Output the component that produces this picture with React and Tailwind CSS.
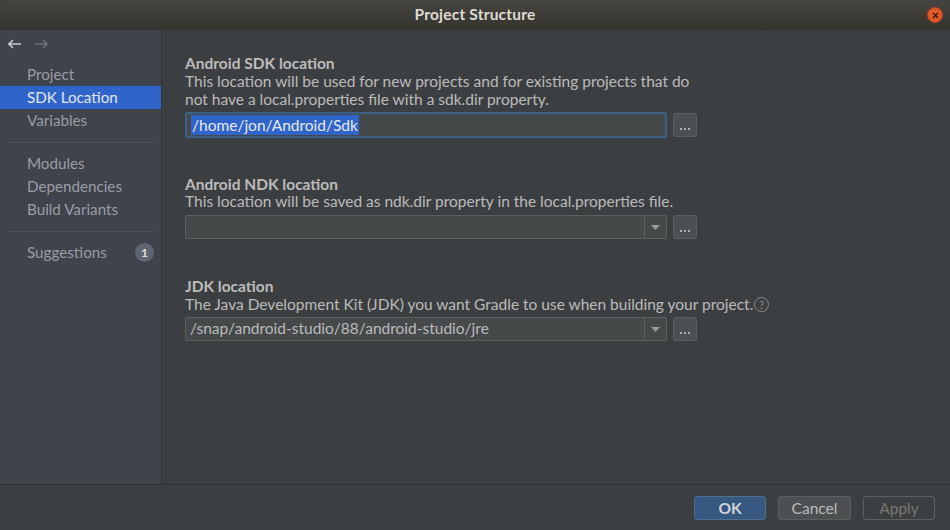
import React from 'react';

const font = { fontFamily: 'Lato, "DejaVu Sans", sans-serif' };

function NavItem({ label, active, badge }) {
  return (
    <div
      className={`h-[23px] flex items-center pl-[27px] pr-2 text-[15.2px] ${
        active ? 'bg-[#2f65ca] text-[#e6e6e6]' : 'text-[#9a9da2]'
      }`}
    >
      <span className="flex-1">{label}</span>
      {badge && (
        <span className="w-[19px] h-[19px] rounded-full bg-[#5e6470] text-[#e0e0e0] text-[12px] font-bold flex items-center justify-center mr-[-1px]">
          {badge}
        </span>
      )}
    </div>
  );
}

function Separator() {
  return <div className="mx-[8px] mt-[10px] mb-[9px] h-px bg-[#4b505a]" />;
}

function BrowseButton() {
  return (
    <button className="w-[24px] h-[24px] rounded-[3px] border border-[#5e6060] bg-[#4c5052] flex items-end justify-center pb-[6px] gap-[2px]">
      <span className="w-[2px] h-[2px] bg-[#a9b1b8]" />
      <span className="w-[2px] h-[2px] bg-[#a9b1b8]" />
      <span className="w-[2px] h-[2px] bg-[#a9b1b8]" />
    </button>
  );
}

function Combo({ value }) {
  return (
    <div className="flex items-center gap-[6px]">
      <div className="w-[482px] h-[24px] border border-[#5e6060] bg-[#45494a] rounded-[2px] flex items-center">
        <div className="flex-1 pl-[4px] text-[15.5px] text-[#bbbbbb] truncate">{value}</div>
        <div className="w-[22px] h-full border-l border-[#5e6060] flex items-center justify-center">
          <svg width="9" height="5" viewBox="0 0 9 5">
            <path d="M0 0 L9 0 L4.5 5 Z" fill="#9a9a9a" />
          </svg>
        </div>
      </div>
      <BrowseButton />
    </div>
  );
}

function Section({ title, children }) {
  return (
    <div className="flex flex-col">
      <div className="text-[15.5px] font-bold text-[#bbbbbb] leading-[18px]">{title}</div>
      {children}
    </div>
  );
}

export default function App() {
  return (
    <div style={font} className="w-[950px] h-[530px] flex flex-col bg-[#3c3f41] overflow-hidden">
      {/* title bar */}
      <div className="h-[30px] shrink-0 relative flex items-center justify-center bg-gradient-to-b from-[#45443f] to-[#35342f] rounded-t-[6px]">
        <span className="text-[15.5px] font-bold text-[#dfdbd2] tracking-[0.2px]">Project Structure</span>
        <div className="absolute right-[7px] top-[7px] w-[16px] h-[16px] rounded-full bg-[#e2582b] border border-[#b8421c] flex items-center justify-center">
          <svg width="7" height="7" viewBox="0 0 7 7">
            <path d="M1 1 L6 6 M6 1 L1 6" stroke="#3a1b10" strokeWidth="1.4" />
          </svg>
        </div>
      </div>

      <div className="flex flex-1 min-h-0">
        {/* sidebar */}
        <div className="w-[162px] shrink-0 bg-[#3e434c] border-r border-[#2f3237] flex flex-col">
          <div className="h-[28px] flex items-center gap-[14px] pl-[8px]">
            <svg width="13" height="10" viewBox="0 0 13 10">
              <path d="M1 5 H13 M5 1 L1 5 L5 9" stroke="#c6c8cc" strokeWidth="1.6" fill="none" />
            </svg>
            <svg width="13" height="10" viewBox="0 0 13 10">
              <path d="M0 5 H12 M8 1 L12 5 L8 9" stroke="#6b6f76" strokeWidth="1.6" fill="none" />
            </svg>
          </div>
          <div className="h-[5px]" />
          <NavItem label="Project" />
          <NavItem label="SDK Location" active />
          <NavItem label="Variables" />
          <Separator />
          <NavItem label="Modules" />
          <NavItem label="Dependencies" />
          <NavItem label="Build Variants" />
          <Separator />
          <NavItem label="Suggestions" badge="1" />
        </div>

        {/* main */}
        <div className="flex-1 pl-[23px] pt-[24px] flex flex-col text-[#bbbbbb]">
          <Section title="Android SDK location">
            <div className="text-[15.5px] leading-[18px]">
              This location will be used for new projects and for existing projects that do
              <br />
              not have a local.properties file with a sdk.dir property.
            </div>
            <div className="flex items-center gap-[6px] mt-[4px]">
              <div className="w-[482px] h-[26px] border-[2px] border-[#3d6185] bg-[#45494a] rounded-[2px] flex items-center pl-[4px]">
                <span className="bg-[#2f65ca] text-[#e8e8e8] text-[15.5px] leading-[20px] px-[1px]">/home/jon/Android/Sdk</span>
              </div>
              <BrowseButton />
            </div>
          </Section>

          <div className="h-[37px]" />
          <Section title="Android NDK location">
            <div className="text-[15.5px] leading-[17px]">
              This location will be saved as ndk.dir property in the local.properties file.
            </div>
            <div className="mt-[5px]">
              <Combo value="" />
            </div>
          </Section>

          <div className="h-[38px]" />
          <Section title="JDK location">
            <div className="text-[15.5px] leading-[18px] flex items-center">
              The Java Development Kit (JDK) you want Gradle to use when building your project.
              <span className="ml-[1px] w-[15px] h-[15px] rounded-full border border-[#8a8a8a] text-[#8a8a8a] text-[11px] leading-none flex items-center justify-center">?</span>
            </div>
            <div className="mt-[4px]">
              <Combo value="/snap/android-studio/88/android-studio/jre" />
            </div>
          </Section>
        </div>
      </div>

      {/* footer */}
      <div className="h-[46px] shrink-0 border-t border-[#323232] flex items-center justify-end gap-[12px] pr-[15px]">
        <button className="w-[72px] h-[24px] rounded-[3px] border border-[#4c708c] bg-[#365880] text-[#d0d4d8] text-[15.5px] font-bold">OK</button>
        <button className="w-[73px] h-[24px] rounded-[3px] border border-[#5e6060] bg-[#4c5052] text-[#bbbbbb] text-[15.5px]">Cancel</button>
        <button className="w-[72px] h-[24px] rounded-[3px] border border-[#5e6060] bg-transparent text-[#777777] text-[15.5px]">Apply</button>
      </div>
    </div>
  );
}
